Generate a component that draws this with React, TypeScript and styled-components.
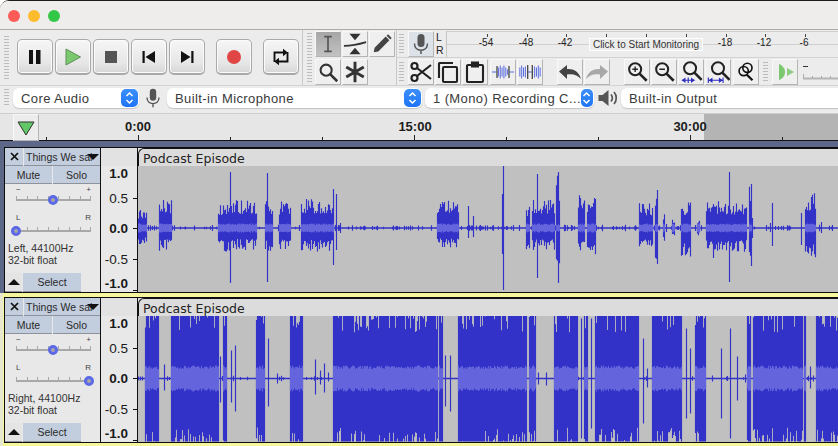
import React, { useMemo } from "react";
import styled, { createGlobalStyle } from "styled-components";

const GlobalStyle = createGlobalStyle`
  html, body {
    margin: 0;
    padding: 0;
    width: 838px;
    height: 446px;
    overflow: hidden;
    background: #fff;
  }
  * { box-sizing: border-box; }
`;

const PEAK = "#3232c8";
const RMS = "#6464dc";

type Burst = [number, number, number, number];
type Spike = [number, number, number];

const randomFrom = (seed: number) => {
  let s = seed;
  return () => {
    s = (s * 16807) % 2147483647;
    return s / 2147483647;
  };
};

// x is page x, amounts are px above and below the centre line
const leftBursts: Burst[] = [
  [138, 147, 19, 18], [159, 172, 29, 23], [218, 231, 26, 24], [231, 257, 28, 22],
  [265, 273, 28, 25], [279, 291, 27, 23], [301, 334, 29, 24], [437, 459, 28, 21],
  [526, 530, 23, 22], [532, 555, 29, 22], [556, 560, 54, 42], [578, 585, 33, 27],
  [587, 596, 31, 28], [639, 653, 25, 23], [655, 658, 36, 36], [663, 665, 16, 16],
  [672, 675, 10, 11], [681, 691, 26, 30], [697, 700, 8, 8], [706, 747, 27, 24],
  [749, 752, 42, 36], [805, 816, 35, 31],
];

const leftSpikes: Spike[] = [
  [230, 56, 55], [267, 55, 54], [333, 39, 37], [336, 34, 22], [340, 5, 5], [468, 22, 10],
  [473, 12, 9], [503, 62, 62], [502, 34, 26], [537, 54, 50], [558, 56, 55], [533, 28, 22],
  [729, 56, 54], [713, 24, 30], [751, 44, 38], [772, 25, 18], [801, 15, 17], [821, 6, 5],
  [657, 38, 36], [752, 10, 10], [666, 4, 4], [770, 5, 4], [832, 3, 3],
];

const rightBursts: [number, number][] = [
  [145, 159], [171, 219], [223, 227], [256, 265], [290, 303], [333, 438], [439, 443],
  [458, 527], [529, 536], [554, 578], [584, 588], [595, 639], [652, 682], [695, 706],
  [747, 751], [753, 803], [804, 806], [816, 838],
];

const rightSpikes: Spike[] = [
  [164, 14, 12], [220, 22, 24], [231, 28, 24], [235, 33, 33], [268, 40, 28], [277, 5, 5],
  [315, 19, 16], [320, 8, 6], [324, 15, 14], [328, 6, 3], [445, 23, 28], [450, 23, 33],
  [538, 6, 6], [546, 6, 7], [581, 60, 60], [591, 60, 50], [643, 40, 45], [647, 10, 9],
  [686, 50, 40], [690, 30, 35], [712, 3, 3], [721, 30, 40], [730, 50, 60], [737, 22, 22],
  [745, 4, 4], [810, 12, 10], [142, 2, 2], [136, 2, 2],
];

const stroke = (x: number, top: number, bottom: number) => `M${x + 0.5} ${top}V${bottom}`;

const buildLeft = (cy: number) => {
  const rnd = randomFrom(41);
  let peak = "";
  let rms = "";
  for (let page = 138; page < 838; page++) {
    const x = page - 138;
    const burst = leftBursts.find((b) => page >= b[0] && page < b[1]);
    if (burst) {
      const up = burst[2] * (0.5 + 0.5 * Math.pow(rnd(), 1.4));
      const down = burst[3] * (0.5 + 0.5 * Math.pow(rnd(), 1.4));
      peak += stroke(x, cy - up, cy + down);
      const r = 3 + rnd() * 1.6;
      rms += stroke(x, cy - r, cy + r);
    } else if (rnd() < 0.3) {
      const h = 1 + rnd() * 2.2;
      peak += stroke(x, cy - h, cy + h);
    }
  }
  leftSpikes.forEach(([page, up, down]) => {
    peak += stroke(page - 138, cy - up, cy + down);
  });
  return { peak, rms, cy };
};

const buildRight = (cy: number) => {
  const rnd = randomFrom(977);
  let peak = "";
  let rms = "";
  for (let page = 138; page < 838; page++) {
    const x = page - 138;
    const burst = rightBursts.find((b) => page >= b[0] && page < b[1]);
    if (burst) {
      const up = rnd() < 0.22 ? 62 - rnd() * 16 : 63;
      const down = rnd() < 0.3 ? 63 - rnd() * 14 : 63;
      peak += stroke(x, cy - up, cy + down);
      const r = 9.5 + rnd() * 3.5;
      rms += stroke(x, cy - r, cy + r);
    } else if (rnd() < 0.12) {
      const h = 1 + rnd() * 2;
      peak += stroke(x, cy - h, cy + h);
    }
  }
  rightSpikes.forEach(([page, up, down]) => {
    peak += stroke(page - 138, cy - up, cy + down);
  });
  return { peak, rms, cy };
};

const Window = styled.div`
  width: 838px;
  height: 446px;
  overflow: hidden;
  display: flex;
  flex-direction: column;
  border-top: 1px solid #1c1c1c;
  border-radius: 9px 0 0 0;
  background: #ececec;
  font-family: "Liberation Sans", Arial, sans-serif;
  color: #222;
`;

const TitleBar = styled.div`
  height: 28px;
  flex: none;
  display: flex;
  align-items: center;
  gap: 8px;
  padding: 2px 0 0 8px;
  background: #eeedec;
`;

const Light = styled.span<{ $color: string }>`
  width: 12px;
  height: 12px;
  border-radius: 50%;
  background: ${(p) => p.$color};
`;

const ToolArea = styled.div`
  height: 57px;
  flex: none;
  display: flex;
  border-top: 1px solid #ababab;
  border-bottom: 1px solid #d2d2d2;
`;

const Grip = styled.span<{ $h?: number; $left?: number }>`
  flex: none;
  width: 5px;
  height: ${(p) => p.$h ?? 20}px;
  margin-left: ${(p) => p.$left ?? 0}px;
  background: repeating-linear-gradient(to bottom, #bcbcbc 0, #bcbcbc 1px, transparent 1px, transparent 3px);
`;

const TransportBar = styled.div`
  width: 302px;
  flex: none;
  display: flex;
  align-items: center;
  padding: 0 0 1px 4px;
`;

const TransportButtons = styled.div`
  display: flex;
  gap: 2px;
  margin-left: 8px;
`;

const TransportButton = styled.div<{ $gap?: number }>`
  width: 36px;
  height: 36px;
  display: flex;
  align-items: center;
  justify-content: center;
  margin-left: ${(p) => p.$gap ?? 0}px;
  border: 1px solid #a9a9a9;
  border-bottom-width: 2px;
  border-radius: 5px;
  background: linear-gradient(#f6f6f6, #e6e6e6 70%, #d6d6d6);
  box-shadow: inset 0 0 0 1px #fbfbfb;
`;

const ToolsBar = styled.div`
  width: 94px;
  flex: none;
  display: flex;
  align-items: center;
  gap: 3px;
  padding-left: 4px;
  border-left: 1px solid #c9c9c9;
`;

const ToolGrid = styled.div`
  display: grid;
  grid-template-columns: repeat(3, 26px);
  grid-auto-rows: 26px;
  gap: 2px 1px;
`;

const IconButton = styled.div<{ $active?: boolean; $pale?: boolean; $left?: number }>`
  width: 26px;
  height: 26px;
  flex: none;
  display: flex;
  align-items: center;
  justify-content: center;
  margin-left: ${(p) => p.$left ?? 0}px;
  border: 1px solid;
  border-color: #f8f8f8 #b4b4b4 #b4b4b4 #f8f8f8;
  background: ${(p) =>
    p.$active ? "linear-gradient(#a6a6a6, #c2c2c2)" : p.$pale ? "#dde2e8" : "#efefef"};
`;

const RightColumn = styled.div`
  flex: 1;
  min-width: 0;
  display: flex;
  flex-direction: column;
`;

const MeterRow = styled.div`
  height: 28px;
  display: flex;
  align-items: center;
  padding-left: 2px;
  border-left: 1px solid #c9c9c9;
  border-bottom: 1px solid #d2d2d2;
`;

const EditRow = styled.div`
  flex: 1;
  display: flex;
  align-items: center;
  padding-left: 2px;
  border-left: 1px solid #c9c9c9;
`;

const ButtonGroup = styled.div<{ $left: number }>`
  display: flex;
  gap: 1px;
  margin-left: ${(p) => p.$left}px;
`;

const SpeedTrack = styled.svg`
  flex: none;
  margin-left: 4px;
`;

const Channels = styled.div`
  width: 11px;
  height: 26px;
  margin-left: 1px;
  display: flex;
  flex-direction: column;
  justify-content: space-around;
  font-size: 10.5px;
  line-height: 11px;
  padding-left: 1px;
`;

const Meter = styled.div`
  position: relative;
  flex: 1;
  height: 26px;
  border-left: 1px solid #c4c4c4;
`;

const MeterLine = styled.div<{ $y: number }>`
  position: absolute;
  left: 0;
  right: 0;
  top: ${(p) => p.$y}px;
  height: 1px;
  background: #cfcfcf;
`;

const MeterTick = styled.div<{ $x: number }>`
  position: absolute;
  left: ${(p) => p.$x - 446}px;
  top: 3px;
  width: 1px;
  height: 3px;
  background: #444;
`;

const MeterLabel = styled.div<{ $x: number }>`
  position: absolute;
  left: ${(p) => p.$x - 446 - 15}px;
  top: 6px;
  width: 28px;
  text-align: center;
  font-size: 10px;
  line-height: 12px;
  color: #222;
`;

const MeterTip = styled.div`
  position: absolute;
  left: 142px;
  top: 7px;
  width: 114px;
  height: 13px;
  border: 1px solid #fff;
  background: #ececec;
  font-size: 10px;
  line-height: 11px;
  text-align: center;
  white-space: nowrap;
  color: #333;
`;

const DeviceBar = styled.div`
  height: 28px;
  flex: none;
  display: flex;
  align-items: center;
  padding: 0 0 3px 4px;
  border-bottom: 1px solid #cfcfcf;
`;

const Select = styled.div<{ $w: number; $left: number }>`
  flex: none;
  width: ${(p) => p.$w}px;
  height: 20px;
  margin-left: ${(p) => p.$left}px;
  display: flex;
  align-items: center;
  justify-content: space-between;
  padding: 0 1px 0 8px;
  border-radius: 6px;
  background: #fff;
  box-shadow: 0 1px 1px #c4c4c4;
  font-size: 13px;
  letter-spacing: 0.4px;
  color: #3a3a3a;
  white-space: nowrap;
`;

const Stepper = styled.span`
  width: 17px;
  height: 18px;
  display: flex;
  align-items: center;
  justify-content: center;
  border-radius: 5px;
  background: linear-gradient(#3c8ffc, #1f74f5);
`;

const DeviceIcon = styled.span<{ $left: number }>`
  display: flex;
  margin-left: ${(p) => p.$left}px;
`;

const Ruler = styled.div`
  position: relative;
  height: 27px;
  flex: none;
  background: #e6e6e6;
  border-bottom: 1px solid #141414;
`;

const RulerShade = styled.div`
  position: absolute;
  left: 704px;
  right: 0;
  top: 0;
  bottom: 0;
  background: #b4b4b4;
`;

const RulerTick = styled.div<{ $x: number; $major?: boolean }>`
  position: absolute;
  left: ${(p) => p.$x}px;
  bottom: 0;
  width: 1px;
  height: ${(p) => (p.$major ? 5 : 3)}px;
  background: #222;
`;

const RulerLabel = styled.div<{ $x: number }>`
  position: absolute;
  left: ${(p) => p.$x - 30}px;
  top: 6px;
  width: 60px;
  text-align: center;
  font-size: 13px;
  font-weight: 700;
  line-height: 14px;
  color: #1c1c1c;
`;

const PinButton = styled.div`
  position: absolute;
  left: 13px;
  top: 0;
  width: 26px;
  height: 27px;
  display: flex;
  align-items: center;
  justify-content: center;
  border: 1px solid;
  border-color: #f8f8f8 #b4b4b4 #b4b4b4 #f8f8f8;
  background: #ececec;
`;

const TrackPanel = styled.div`
  flex: 1;
  display: flex;
  flex-direction: column;
  padding: 6px 0 0 3px;
  background: linear-gradient(#5d6788 0, #5d6788 152px, #e8e8cf 152px);
`;

const Highlight = styled.div<{ $on?: boolean }>`
  padding: ${(p) => (p.$on ? "4px 0 3px 1px" : "0 0 0 1px")};
  background: ${(p) => (p.$on ? "#f6f69c" : "transparent")};
`;

const TrackRow = styled.div<{ $h: number }>`
  height: ${(p) => p.$h}px;
  display: flex;
  border: 1px solid #0d0d0d;
  border-width: 1px 0 1px 1px;
  background: #e8e8e8;
`;

const LabelPanel = styled.div`
  width: 96px;
  flex: none;
  display: flex;
  flex-direction: column;
  background: #e8e8e8;
  border-right: 1px solid #111;
  font-size: 10.5px;
`;

const LabelRow = styled.div`
  height: 18px;
  flex: none;
  display: flex;
  gap: 1px;
`;

const BlueButton = styled.div<{ $w?: number; $plain?: boolean }>`
  position: relative;
  flex: ${(p) => (p.$w ? "none" : "1")};
  width: ${(p) => (p.$w ? `${p.$w}px` : "auto")};
  min-width: 0;
  display: flex;
  align-items: center;
  justify-content: center;
  white-space: nowrap;
  background: ${(p) => (p.$plain ? "#e4e4e4" : "#c2cddd")};
  border-bottom: 1px solid #8d929c;
  color: #2a2a2a;
`;

const TrackName = styled(BlueButton)`
  justify-content: flex-start;
  padding-left: 2px;
`;

const NameArrow = styled.span`
  position: absolute;
  right: 1px;
  top: 6px;
  border-left: 6px solid transparent;
  border-right: 6px solid transparent;
  border-top: 6px solid #111;
`;

const ScaleMarks = styled.div<{ $top: number }>`
  height: 10px;
  margin: ${(p) => p.$top}px 9px 0 11px;
  display: flex;
  align-items: center;
  justify-content: space-between;
  font-size: 8px;
  line-height: 10px;
  color: #444;
`;

const Slider = styled.div<{ $top?: number }>`
  position: relative;
  height: 10px;
  margin: ${(p) => p.$top ?? 0}px 9px 0 11px;
  &::before {
    content: "";
    position: absolute;
    left: 0;
    right: 0;
    top: 4px;
    height: 2px;
    background: #a8a8a8;
  }
  &::after {
    content: "";
    position: absolute;
    left: 0;
    right: 0;
    top: 1px;
    height: 3px;
    background: repeating-linear-gradient(to right, #a8a8a8 0, #a8a8a8 1px, transparent 1px, transparent 10.6px);
  }
`;

const Thumb = styled.span<{ $x: number }>`
  position: absolute;
  z-index: 1;
  left: ${(p) => p.$x - 5}px;
  top: 0;
  width: 10px;
  height: 10px;
  border-radius: 50%;
  border: 3px solid #5b68e8;
  background: #a6a6a6;
`;

const TrackInfo = styled.div`
  margin: 6px 0 0 3px;
  font-size: 10.5px;
  line-height: 12px;
  color: #333;
`;

const LabelFooter = styled.div`
  margin-top: auto;
  height: 19px;
  flex: none;
  display: flex;
  gap: 1px;
`;

const Collapse = styled.span`
  border-left: 6px solid transparent;
  border-right: 6px solid transparent;
  border-bottom: 6px solid #111;
`;

const Axis = styled.div`
  position: relative;
  width: 37px;
  flex: none;
  background: #e8e8e8;
  border-right: 1px solid #111;
`;

const AxisHead = styled.div`
  height: 18px;
  background: #e2e2e2;
`;

const AxisLabel = styled.div<{ $y: number; $bold?: boolean }>`
  position: absolute;
  right: 9px;
  top: ${(p) => p.$y - 6}px;
  font-size: 13.5px;
  line-height: 14px;
  font-weight: ${(p) => (p.$bold ? 700 : 400)};
  color: #1a1a1a;
`;

const AxisTick = styled.div<{ $y: number }>`
  position: absolute;
  right: 0;
  top: ${(p) => p.$y}px;
  width: 4px;
  height: 1px;
  background: #111;
`;

const Clip = styled.div`
  flex: 1;
  min-width: 0;
  display: flex;
  flex-direction: column;
`;

const ClipTitle = styled.div`
  height: 18px;
  flex: none;
  padding-left: 4px;
  border-top: 1px solid #111;
  border-left: 1px solid #111;
  border-radius: 6px 0 0 0;
  background: #dcdcdc;
  font-family: "DejaVu Sans", sans-serif;
  font-size: 12.5px;
  line-height: 19px;
  color: #222;
  white-space: nowrap;
`;

const WaveBox = styled.div`
  flex: 1;
  min-height: 0;
  background: #c0c0c0;
  svg { display: block; }
`;

const Arrow = ({ d, fill = "#111" }: { d: string; fill?: string }) => (
  <svg width="22" height="22" viewBox="0 0 22 22">
    <path d={d} fill={fill} />
  </svg>
);

const LoopIcon = () => (
  <svg width="22" height="22" viewBox="0 0 22 22" fill="none" stroke="#111" strokeWidth="1.9">
    <path d="M4.500 16V6.500h10" />
    <path d="M17.500 6v9.500h-10" />
    <path d="M13 2.800v7.400L17.800 6.500z" fill="#111" stroke="none" />
    <path d="M9 11.800v7.400L4.200 15.500z" fill="#111" stroke="none" />
  </svg>
);

const Icon = ({ children }: { children: React.ReactNode }) => (
  <svg width="26" height="26" viewBox="0 0 26 26" fill="none">
    {children}
  </svg>
);

const Lens = ({ x = 11, y = 11, r = 6, color = "#222", w = 2.2, children }: { x?: number; y?: number; r?: number; color?: string; w?: number; children?: React.ReactNode }) => (
  <>
    <circle cx={x} cy={y} r={r} stroke={color} strokeWidth={w} fill="none" />
    <path d={`M${x + r * 0.72} ${y + r * 0.72}L${x + r + 6} ${y + r + 6}`} stroke={color} strokeWidth={w + 0.6} />
    {children}
  </>
);

const MicIcon = ({ size = 24 }: { size?: number }) => (
  <svg width={size} height={size} viewBox="0 0 24 24" fill="none">
    <rect x="8.500" y="2" width="7" height="13" rx="3.500" fill="#555" />
    <path d="M5.500 11.500c0 4.200 2.800 6.700 6.500 6.700s6.500-2.500 6.500-6.700M12 18v4" stroke="#555" strokeWidth="1.500" />
  </svg>
);

const SpeakerIcon = () => (
  <svg width="22" height="22" viewBox="0 0 22 22" fill="none">
    <path d="M1.500 8h4l6-5v16l-6-5h-4z" fill="#555" />
    <path d="M14 7.500c1.600 2 1.600 5 0 7M17 5c3 3.400 3 8.600 0 12" stroke="#555" strokeWidth="1.700" />
  </svg>
);

const StepperIcon = () => (
  <Stepper>
    <svg width="11" height="14" viewBox="0 0 11 14" fill="none" stroke="#fff" strokeWidth="1.500">
      <path d="M2.500 5 5.500 2l3 3M2.500 9l3 3 3-3" />
    </svg>
  </Stepper>
);

const WaveGlyph = ({ variant }: { variant: "trim" | "silence" }) => (
  <Icon>
    {variant === "trim" ? (
      <>
        <path d="M1 13h5M20 13h5" stroke="#5a6ce0" strokeWidth="1.200" />
        <path d="M8 8v10M10 6v14M12 8v10M14 6v14M16 8v10M18 10v6" stroke="#5a6ce0" strokeWidth="1.100" />
        <path d="M6.500 6.500v13M19.500 6.500v13" stroke="#444" strokeWidth="1.400" />
      </>
    ) : (
      <>
        <path d="M2 8v10M4 6v14M6 8v10M8 7v12M18 7v12M20 8v10M22 6v14M24 8v10" stroke="#5a6ce0" strokeWidth="1.100" />
        <path d="M10 13h6" stroke="#5a6ce0" strokeWidth="1.200" />
        <path d="M10.500 5.500v15M15.500 5.500v15" stroke="#444" strokeWidth="1.400" />
      </>
    )}
  </Icon>
);

const wavesLeft = () => buildLeft(62);
const wavesRight = () => buildRight(62.5);

type TrackProps = {
  channel: string;
  pan: number;
  height: number;
  selected?: boolean;
  build: () => { peak: string; rms: string; cy: number };
};

const Track = ({ channel, pan, height, selected, build }: TrackProps) => {
  const wave = useMemo(build, [build]);
  return (
    <Highlight $on={selected}>
      <TrackRow $h={height}>
        <LabelPanel>
          <LabelRow>
            <BlueButton $w={18}>
              <svg width="9" height="9" viewBox="0 0 9 9" stroke="#111" strokeWidth="1.700">
                <path d="M1 1l7 7M8 1 1 8" />
              </svg>
            </BlueButton>
            <TrackName>
              Things We sai
              <NameArrow />
            </TrackName>
          </LabelRow>
          <LabelRow>
            <BlueButton>Mute</BlueButton>
            <BlueButton>Solo</BlueButton>
          </LabelRow>
          <ScaleMarks $top={1}>
            <span>−</span>
            <span>+</span>
          </ScaleMarks>
          <Slider>
            <Thumb $x={37} />
          </Slider>
          <ScaleMarks $top={8}>
            <span>L</span>
            <span>R</span>
          </ScaleMarks>
          <Slider $top={3}>
            <Thumb $x={pan} />
          </Slider>
          <TrackInfo>
            {channel}, 44100Hz
            <br />
            32-bit float
          </TrackInfo>
          <LabelFooter>
            <BlueButton $w={17} $plain>
              <Collapse />
            </BlueButton>
            <BlueButton $w={58}>Select</BlueButton>
          </LabelFooter>
        </LabelPanel>
        <Axis>
          <AxisHead />
          <AxisLabel $y={25} $bold>1.0</AxisLabel>
          <AxisLabel $y={50}>0.5</AxisLabel>
          <AxisLabel $y={80} $bold>0.0</AxisLabel>
          <AxisLabel $y={111}>-0.5</AxisLabel>
          <AxisLabel $y={135} $bold>-1.0</AxisLabel>
          <AxisTick $y={50} />
          <AxisTick $y={80} />
          <AxisTick $y={111} />
          <AxisTick $y={142} />
        </Axis>
        <Clip>
          <ClipTitle>Podcast Episode</ClipTitle>
          <WaveBox>
            <svg width="700" height="126" viewBox="0 0 700 126" fill="none">
              <path d={`M0 ${wave.cy}H700`} stroke={PEAK} strokeWidth="1.500" />
              <path d={wave.peak} stroke={PEAK} strokeWidth="1.150" />
              <path d={wave.rms} stroke={RMS} strokeWidth="1.150" />
            </svg>
          </WaveBox>
        </Clip>
      </TrackRow>
    </Highlight>
  );
};

const meterMarks: [number, string][] = [
  [486, "-54"], [526, "-48"], [565, "-42"], [605, ""], [645, ""], [685, ""],
  [725, "-18"], [764, "-12"], [804, "-6"],
];

const rulerTicks = [46, 138, 230, 322, 414, 506, 598, 690, 782];

export default function App() {
  return (
    <Window>
      <GlobalStyle />
      <TitleBar>
        <Light $color="#fc5b57" />
        <Light $color="#fdbb2e" />
        <Light $color="#33c748" />
      </TitleBar>

      <ToolArea>
        <TransportBar>
          <Grip $h={43} />
          <TransportButtons>
            <TransportButton>
              <Arrow d="M5 4h4v14H5zM12 4h4.500v14H12z" />
            </TransportButton>
            <TransportButton>
              <svg width="22" height="22" viewBox="0 0 22 22">
                <path d="M4 3l14.500 8L4 19z" fill="#7cc86e" stroke="#5c8f58" strokeWidth="1" />
              </svg>
            </TransportButton>
            <TransportButton>
              <Arrow d="M5 5h12v12H5z" fill="#555" />
            </TransportButton>
            <TransportButton>
              <Arrow d="M4.500 5h2.200v12H4.500zM17 5v12L7.500 11z" />
            </TransportButton>
            <TransportButton>
              <Arrow d="M15.300 5h2.200v12h-2.200zM5 5v12l9.500-6z" />
            </TransportButton>
            <TransportButton $gap={9}>
              <svg width="22" height="22" viewBox="0 0 22 22">
                <circle cx="11" cy="11" r="7" fill="#e04646" />
              </svg>
            </TransportButton>
            <TransportButton $gap={9}>
              <LoopIcon />
            </TransportButton>
          </TransportButtons>
        </TransportBar>

        <ToolsBar>
          <Grip $h={50} />
          <ToolGrid>
            <IconButton $active>
              <Icon>
                <path d="M9 5h8M9 21h8M13 5v16" stroke="#555" strokeWidth="1.800" />
              </Icon>
            </IconButton>
            <IconButton>
              <Icon>
                <path d="M7 2h12l-6 7zM7 24h12l-6-7z" fill="#333" />
                <path d="M1 15c7 0 14-1 24-4" stroke="#333" strokeWidth="2" />
              </Icon>
            </IconButton>
            <IconButton>
              <Icon>
                <path d="M5 17 17 5l4 4L9 21l-5 1z" fill="#444" />
                <path d="M18 4l1.500-1.500 4 4L22 8z" fill="#444" />
              </Icon>
            </IconButton>
            <IconButton>
              <Icon>
                <Lens x={11} y={11} r={6} color="#333" />
              </Icon>
            </IconButton>
            <IconButton>
              <Icon>
                <path d="M13 2v22M3.500 7.500l19 11M22.500 7.500l-19 11" stroke="#333" strokeWidth="3.200" />
              </Icon>
            </IconButton>
          </ToolGrid>
        </ToolsBar>

        <RightColumn>
          <MeterRow>
            <Grip $h={20} />
            <IconButton $pale $left={4}>
              <MicIcon />
            </IconButton>
            <Channels>
              <span>L</span>
              <span>R</span>
            </Channels>
            <Meter>
              <MeterLine $y={0} />
              <MeterLine $y={13} />
              {meterMarks.map(([x, label]) => (
                <React.Fragment key={x}>
                  <MeterTick $x={x} />
                  {label && <MeterLabel $x={x}>{label}</MeterLabel>}
                </React.Fragment>
              ))}
              <MeterTip>Click to Start Monitoring</MeterTip>
            </Meter>
          </MeterRow>

          <EditRow>
            <Grip $h={20} />
            <ButtonGroup $left={4}>
              <IconButton>
                <svg width="24" height="24" viewBox="0 0 24 24" fill="none" stroke="#222" strokeWidth="2.200">
                  <circle cx="5.500" cy="6" r="3" />
                  <circle cx="5.500" cy="18" r="3" />
                  <path d="M8 8 22 19M8 16 22 5" />
                </svg>
              </IconButton>
              <IconButton>
                <svg width="24" height="24" viewBox="0 0 24 24" fill="none" stroke="#222" strokeWidth="2.100">
                  <rect x="7" y="7" width="14" height="15" rx="1" />
                  <path d="M3 18V3.500c0-.3.2-.5.5-.5H17" />
                </svg>
              </IconButton>
              <IconButton>
                <svg width="24" height="24" viewBox="0 0 24 24" fill="none" stroke="#222" strokeWidth="2.100">
                  <rect x="4" y="5" width="16" height="17" rx="1" />
                  <path d="M9 2.500h6v4H9z" fill="#222" />
                </svg>
              </IconButton>
              <IconButton $left={1}>
                <WaveGlyph variant="trim" />
              </IconButton>
              <IconButton>
                <WaveGlyph variant="silence" />
              </IconButton>
            </ButtonGroup>

            <ButtonGroup $left={14}>
              <IconButton>
                <svg width="24" height="24" viewBox="0 0 24 24">
                  <path d="M1 11.500 9 5v4c6-.5 12 2 14 10-3.500-4-8-5.500-14-4.500V19z" fill="#444" />
                </svg>
              </IconButton>
              <IconButton>
                <svg width="24" height="24" viewBox="0 0 24 24">
                  <path d="M23 11.500 15 5v4C9 8.500 3 11 1 19c3.500-4 8-5.500 14-4.500V19z" fill="#a8a8a8" />
                </svg>
              </IconButton>
            </ButtonGroup>

            <ButtonGroup $left={14}>
              <IconButton>
                <Icon>
                  <Lens x={11} y={10} r={6.500}>
                    <path d="M8 10h6M11 7v6" stroke="#222" strokeWidth="1.500" />
                  </Lens>
                </Icon>
              </IconButton>
              <IconButton>
                <Icon>
                  <Lens x={11} y={10} r={6.500}>
                    <path d="M8 10h6" stroke="#222" strokeWidth="1.500" />
                  </Lens>
                </Icon>
              </IconButton>
              <IconButton>
                <Icon>
                  <Lens x={12} y={9} r={6.500} />
                  <path d="M3 22h14" stroke="#2b2bc0" strokeWidth="1.200" />
                  <path d="M3 22l4-3v6zM17 22l-4-3v6z" fill="#2b2bc0" />
                  <path d="M10 19v6" stroke="#2b2bc0" strokeWidth="1.200" />
                </Icon>
              </IconButton>
              <IconButton>
                <Icon>
                  <Lens x={13} y={9} r={6.500} />
                  <path d="M2.500 19v6M18.500 19v6M3 22h15" stroke="#2b2bc0" strokeWidth="1.200" />
                  <path d="M3 22l4-3v6zM18 22l-4-3v6z" fill="#2b2bc0" />
                </Icon>
              </IconButton>
              <IconButton $left={1}>
                <Icon>
                  <circle cx="14.500" cy="8.500" r="5" stroke="#111" strokeWidth="1.800" />
                  <circle cx="10.500" cy="12" r="5" stroke="#111" strokeWidth="1.800" />
                  <path d="M14 16l6 6" stroke="#111" strokeWidth="2.400" />
                </Icon>
              </IconButton>
            </ButtonGroup>

            <Grip $h={20} $left={4} />
            <ButtonGroup $left={4}>
              <IconButton>
                <svg width="24" height="24" viewBox="0 0 24 24">
                  <path d="M6 4c3 1 6 4 6 8s-3 7-6 8z" fill="#7cc86e" />
                  <path d="M14 8l7 4-7 4z" fill="#8ccb80" />
                </svg>
              </IconButton>
            </ButtonGroup>
            <SpeedTrack width="36" height="26" viewBox="0 0 36 26" fill="none">
              <path d="M1 7.500h5" stroke="#333" />
              <path d="M1 19.500h35" stroke="#b4b4b4" strokeWidth="2" />
              <path d="M1.500 15v4M10.500 17v2M19.500 17v2M28.500 17v2" stroke="#aaa" />
            </SpeedTrack>
          </EditRow>
        </RightColumn>
      </ToolArea>

      <DeviceBar>
        <Grip $h={18} />
        <Select $w={126} $left={4}>
          Core Audio
          <StepperIcon />
        </Select>
        <DeviceIcon $left={3}>
          <MicIcon size={22} />
        </DeviceIcon>
        <Select $w={255} $left={3}>
          Built-in Microphone
          <StepperIcon />
        </Select>
        <Select $w={169} $left={3}>
          1 (Mono) Recording C...
          <StepperIcon />
        </Select>
        <DeviceIcon $left={3}>
          <SpeakerIcon />
        </DeviceIcon>
        <Select $w={240} $left={2}>
          Built-in Output
        </Select>
      </DeviceBar>

      <Ruler>
        <RulerShade />
        <PinButton>
          <svg width="20" height="18" viewBox="0 0 20 18">
            <path d="M2 3h16l-8 13z" fill="#62c766" stroke="#333" strokeWidth="1" />
          </svg>
        </PinButton>
        {rulerTicks.map((x, i) => (
          <RulerTick key={x} $x={x} $major={i % 3 === 1} />
        ))}
        <RulerLabel $x={138}>0:00</RulerLabel>
        <RulerLabel $x={415}>15:00</RulerLabel>
        <RulerLabel $x={690}>30:00</RulerLabel>
      </Ruler>

      <TrackPanel>
        <Track channel="Left" pan={0} height={146} build={wavesLeft} />
        <Track channel="Right" pan={73} height={146} selected build={wavesRight} />
      </TrackPanel>
    </Window>
  );
}
